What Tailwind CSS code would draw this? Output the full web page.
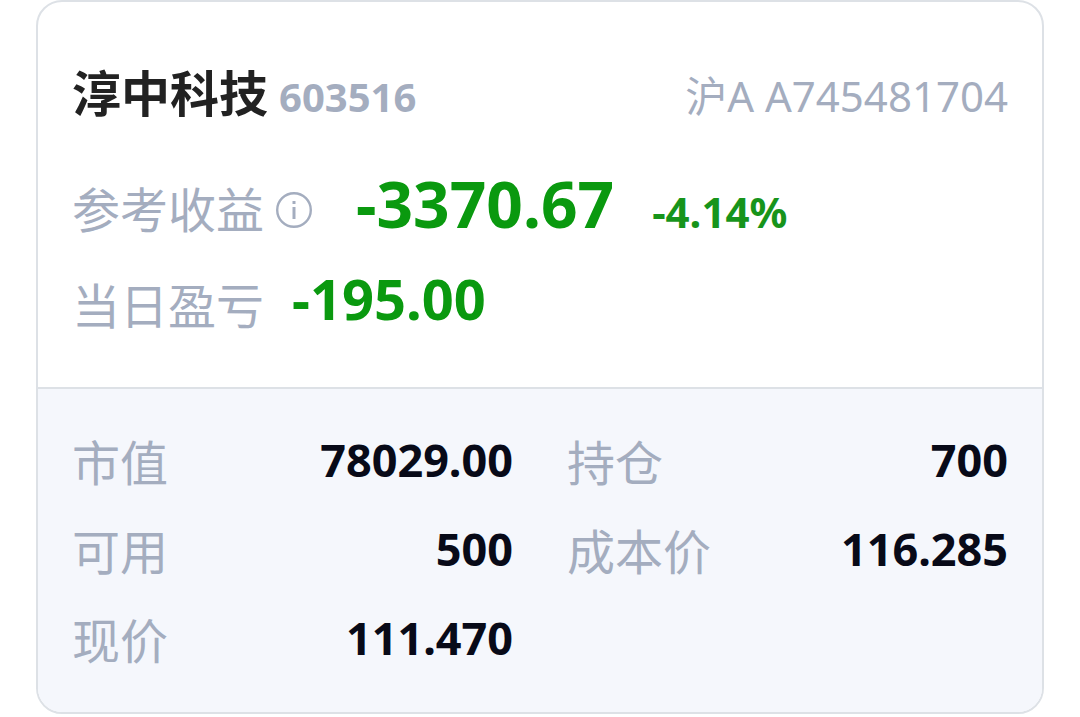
<!DOCTYPE html>
<html lang="zh-CN">
<head>
<meta charset="utf-8">
<meta name="viewport" content="width=device-width, initial-scale=1">
<title>淳中科技 603516</title>
<script src="https://cdn.jsdelivr.net/npm/@tailwindcss/browser@4"></script>
</head>
<body class="bg-white font-['Noto_Sans','Noto_Sans_CJK_SC',sans-serif] text-[#a4adbf]">
<main class="mx-9 overflow-hidden rounded-[26px] border-2 border-[#dde1e6]">
  <section class="px-[34px] pt-[57px] pb-11">
    <header class="flex items-baseline justify-between leading-[64px]">
      <div class="flex items-baseline gap-[11px]">
        <h1 class="font-['Noto_Sans_CJK_SC',sans-serif] text-[49px] font-bold text-[#222222]">淳中科技</h1>
        <span class="text-[40px] font-bold">603516</span>
      </div>
      <span class="text-[42px]">沪A A745481704</span>
    </header>
    <div class="mt-[35px] flex items-baseline leading-[80px]">
      <span class="font-['Noto_Sans_CJK_SC',sans-serif] text-[48px]">参考收益</span>
      <button type="button" aria-label="参考收益说明" class="mt-1 ml-3 size-9 self-center">
        <svg viewBox="0 0 36 36" class="size-9" fill="none" stroke="currentColor">
          <circle cx="18" cy="18" r="16.8" stroke-width="2.4"/>
          <path d="M18 9v3M18 15v12" stroke-width="3"/>
        </svg>
      </button>
      <span class="ml-11 text-[64px] font-bold text-[#0a990f]">-3370.67</span>
      <span class="ml-[38px] text-[42px] font-bold text-[#17941b]">-4.14%</span>
    </div>
    <div class="mt-[11px] flex items-start">
      <span class="font-['Noto_Sans_CJK_SC',sans-serif] text-[48px] leading-[80px]">当日盈亏</span>
      <span class="ml-7 text-[56px] leading-[70px] font-bold text-[#0a990f]">-195.00</span>
    </div>
  </section>
  <dl class="grid grid-cols-2 gap-x-[54px] gap-y-[25px] border-t-2 border-[#dde1e6] bg-[#f5f7fc] px-[34px] pt-[39px] pb-[42px] leading-[64px]">
    <div class="flex items-center justify-between">
      <dt class="font-['Noto_Sans_CJK_SC',sans-serif] text-[48px]">市值</dt>
      <dd class="text-[45px] font-bold text-[#080a18]">78029.00</dd>
    </div>
    <div class="flex items-center justify-between">
      <dt class="font-['Noto_Sans_CJK_SC',sans-serif] text-[48px]">持仓</dt>
      <dd class="text-[45px] font-bold text-[#080a18]">700</dd>
    </div>
    <div class="flex items-center justify-between">
      <dt class="font-['Noto_Sans_CJK_SC',sans-serif] text-[48px]">可用</dt>
      <dd class="text-[45px] font-bold text-[#080a18]">500</dd>
    </div>
    <div class="flex items-center justify-between">
      <dt class="font-['Noto_Sans_CJK_SC',sans-serif] text-[48px]">成本价</dt>
      <dd class="text-[45px] font-bold text-[#080a18]">116.285</dd>
    </div>
    <div class="flex items-center justify-between">
      <dt class="font-['Noto_Sans_CJK_SC',sans-serif] text-[48px]">现价</dt>
      <dd class="text-[45px] font-bold text-[#080a18]">111.470</dd>
    </div>
  </dl>
</main>
</body>
</html>
